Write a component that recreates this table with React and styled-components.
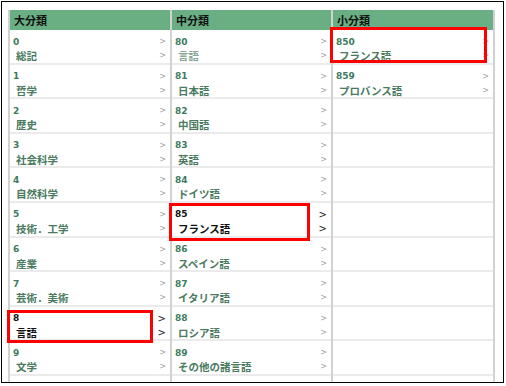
import React from "react";
import styled, { createGlobalStyle } from "styled-components";

const GlobalStyle = createGlobalStyle`
  html, body {
    margin: 0;
    padding: 0;
    background: #fff;
  }
  body {
    font-family: "DejaVu Sans", "Noto Sans CJK JP", sans-serif;
  }
`;

const major = [
  { code: "0", name: "総記" },
  { code: "1", name: "哲学" },
  { code: "2", name: "歴史" },
  { code: "3", name: "社会科学" },
  { code: "4", name: "自然科学" },
  { code: "5", name: "技術．工学" },
  { code: "6", name: "産業" },
  { code: "7", name: "芸術．美術" },
  { code: "8", name: "言語", active: true },
  { code: "9", name: "文学" },
];

const middle = [
  { code: "80", name: "言語", visited: true },
  { code: "81", name: "日本語" },
  { code: "82", name: "中国語" },
  { code: "83", name: "英語" },
  { code: "84", name: "ドイツ語" },
  { code: "85", name: "フランス語", active: true },
  { code: "86", name: "スペイン語" },
  { code: "87", name: "イタリア語" },
  { code: "88", name: "ロシア語" },
  { code: "89", name: "その他の諸言語" },
];

const minor = [
  { code: "850", name: "フランス語" },
  { code: "859", name: "プロバンス語" },
];

const ROWS = 11;

const columns = [
  { title: "大分類", items: major },
  { title: "中分類", items: middle },
  { title: "小分類", items: minor },
];

const App = () => {
  return (
    <>
      <GlobalStyle />
      <Frame>
        <Table>
          {columns.map((col, ci) => (
            <Column key={col.title} $last={ci === columns.length - 1}>
              <Head>{col.title}</Head>
              {Array.from({ length: ROWS }).map((_, i) => {
                const item = col.items[i];
                return (
                  <Row key={i}>
                    {item && (
                      <>
                        <Line>
                          <Code $active={item.active}>{item.code}</Code>
                          <Arrow $active={item.active}>&gt;</Arrow>
                        </Line>
                        <Line>
                          <Name $active={item.active} $visited={item.visited}>
                            {item.name}
                          </Name>
                          <Arrow $active={item.active}>&gt;</Arrow>
                        </Line>
                      </>
                    )}
                  </Row>
                );
              })}
            </Column>
          ))}
        </Table>
        <Mark style={{ left: 328, top: 25, width: 157, height: 36 }} />
        <Mark style={{ left: 167, top: 201, width: 141, height: 38 }} />
        <Mark style={{ left: 5, top: 308, width: 146, height: 33 }} />
      </Frame>
    </>
  );
};

export default App;

const Frame = styled.div`
  position: relative;
  box-sizing: border-box;
  margin: 1px 0 0 1px;
  width: 503px;
  height: 382px;
  border: 1px solid #000;
  padding: 8px 0 0 6px;
  overflow: hidden;
`;

const Table = styled.div`
  display: grid;
  grid-template-columns: 162px 161px 164px;
  width: 487px;
`;

const Column = styled.div`
  display: flex;
  flex-direction: column;
  border-left: 2px solid #d2d2d2;
  ${(p) => p.$last && "border-right: 2px solid #d2d2d2;"}
`;

const Head = styled.div`
  height: 20px;
  background: #6aaf83;
  color: #111;
  font-family: "Noto Sans CJK JP", sans-serif;
  font-weight: 700;
  font-size: 11px;
  line-height: 20px;
  padding-left: 4px;
`;

const Row = styled.div`
  box-sizing: border-box;
  height: 34.6px;
  padding: 4.5px 4px 0 3px;
  border-bottom: 2px solid #ebebeb;
`;

const Line = styled.div`
  display: flex;
  align-items: center;
  justify-content: space-between;
  height: 14px;
`;

const Code = styled.span`
  font-family: "DejaVu Sans", sans-serif;
  font-weight: 700;
  font-size: 9px;
  color: ${(p) => (p.$active ? "#111" : "#3d7a5e")};
`;

const Name = styled.span`
  padding-left: 3px;
  font-family: "Noto Sans CJK JP", sans-serif;
  font-weight: 700;
  font-size: 10.5px;
  color: ${(p) => (p.$active ? "#111" : p.$visited ? "#86a696" : "#4a7a60")};
`;

const Arrow = styled.span`
  font-family: "DejaVu Sans", sans-serif;
  font-size: ${(p) => (p.$active ? "10px" : "8px")};
  color: ${(p) => (p.$active ? "#222" : "#a0a0a0")};
`;

const Mark = styled.div`
  position: absolute;
  box-sizing: border-box;
  border: 3px solid #f00;
  pointer-events: none;
`;
